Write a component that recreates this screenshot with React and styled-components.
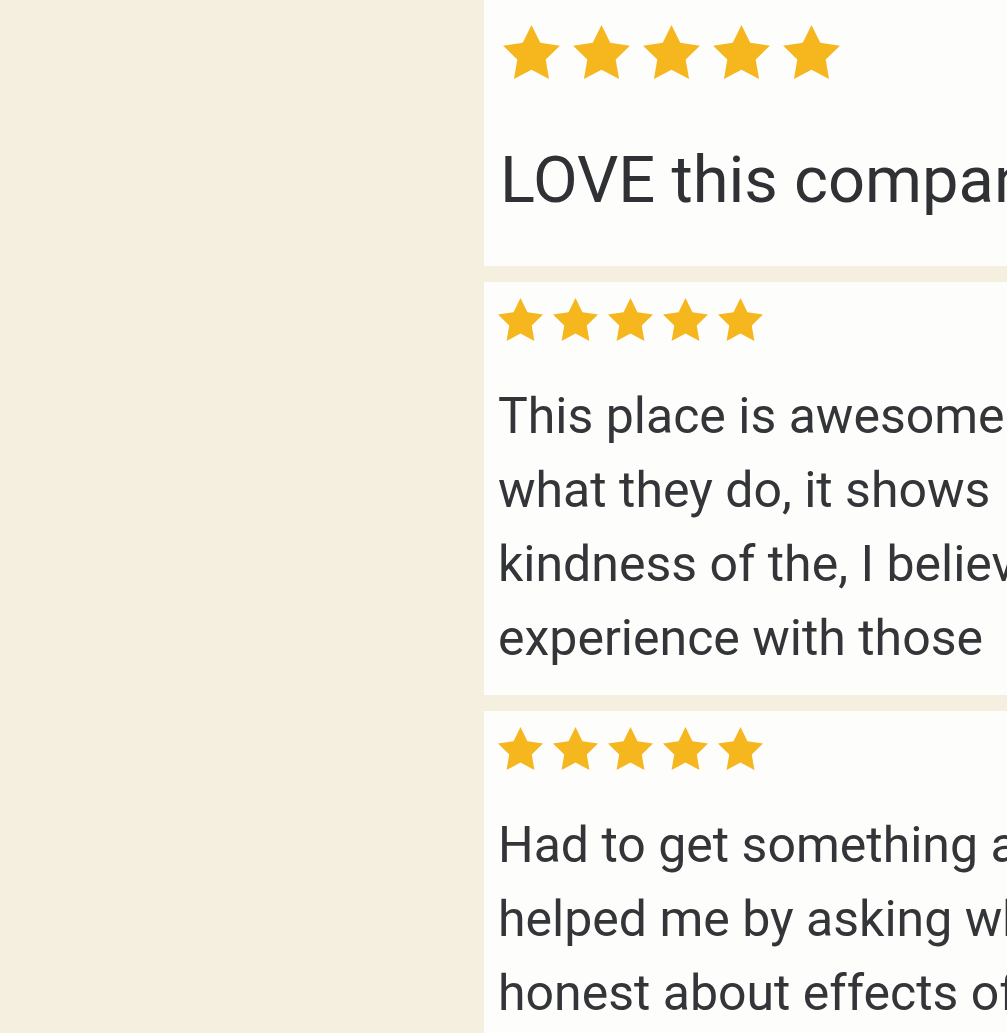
import React from 'react'
import styled, { createGlobalStyle } from 'styled-components'

const GlobalStyle = createGlobalStyle`
html, body {
    margin: 0;
    padding: 0;
    overflow: hidden;
    background: #f5efdf;
}
body {
    font-family: Roboto, 'Liberation Sans', Arial, sans-serif;
    color: #333;
}
`

const Page = styled.div`
display: flex;
min-height: 100vh;
background: #f5efdf;
`

const Aside = styled.div`
width: 484px;
flex-shrink: 0;
`

const Feed = styled.div`
display: flex;
flex-direction: column;
gap: 16px;
width: 900px;
flex-shrink: 0;
`

const Card = styled.div`
background: #fdfdfc;
padding: ${p => p.$big ? '25px 16px 49px 16px' : '16px 16px 20px 14px'};
`

const Stars = styled.div`
display: flex;
gap: ${p => p.$big ? '13px' : '10px'};
padding-left: ${p => p.$big ? '3px' : '0'};
`

const Headline = styled.p`
margin: 64px 0 0 0;
font-size: 65px;
line-height: 74px;
color: #2f3134;
white-space: nowrap;
`

const Body = styled.p`
margin: 38px 0 0 0;
font-size: 50px;
line-height: 74px;
color: #333538;
white-space: nowrap;
`

const Star = ({ size }) => (
    <svg width={size} height={Math.round(size * 0.951)} viewBox="2 2 20 19.02">
        <path
            d="M12 2l3.09 6.26L22 9.27l-5 4.87 1.18 6.88L12 17.77l-6.18 3.25L7 14.14 2 9.27l6.91-1.01L12 2z"
            fill="#f6b61e"
        />
    </svg>
)

const Rating = ({ big }) => (
    <Stars $big={big}>
        {[0, 1, 2, 3, 4].map(i => <Star key={i} size={big ? 57 : 45} />)}
    </Stars>
)

const reviews = [
    [
        'This place is awesome! The staff truly love',
        'what they do, it shows',
        'kindness of the, I believe, owner made my',
        'experience with those',
    ],
    [
        'Had to get something at the last minute, they',
        'helped me by asking what I needed and were',
        'honest about effects of each product.',
        'Would definitely come back again.',
    ],
]

const App = () => (
    <Page>
        <GlobalStyle />
        <Aside />
        <Feed>
            <Card $big>
                <Rating big />
                <Headline>LOVE this company!</Headline>
            </Card>
            {reviews.map((lines, i) => (
                <Card key={i}>
                    <Rating />
                    <Body>
                        {lines.map((l, j) => (
                            <React.Fragment key={j}>
                                {l}
                                {j < lines.length - 1 && <br />}
                            </React.Fragment>
                        ))}
                    </Body>
                </Card>
            ))}
        </Feed>
    </Page>
)

export default App
